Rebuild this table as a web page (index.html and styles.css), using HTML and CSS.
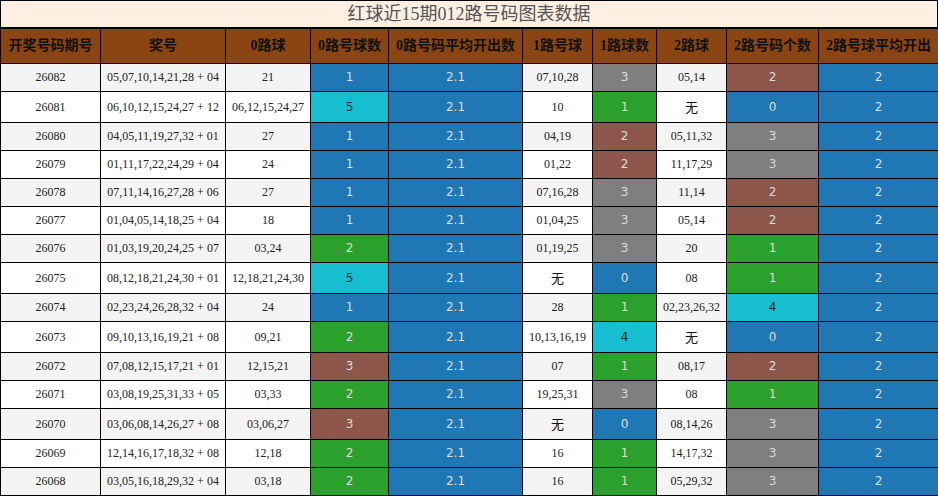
FILE: index.html
```html
<!DOCTYPE html>
<html lang="zh-CN">
<head>
<meta charset="utf-8">
<title>红球近15期012路号码图表数据</title>
<link rel="stylesheet" href="styles.css">
</head>
<body>
<div class="wrap">
  <div class="title">红球近15期012路号码图表数据</div>
  <table class="grid">
    <colgroup>
      <col class="c1"><col class="c2"><col class="c3"><col class="c4"><col class="c5">
      <col class="c6"><col class="c7"><col class="c8"><col class="c9"><col class="c10">
    </colgroup>
    <thead>
      <tr>
        <th>开奖号码期号</th><th>奖号</th><th>0路球</th><th>0路号球数</th><th>0路号码平均开出数</th>
        <th>1路号球</th><th>1路球数</th><th>2路球</th><th>2路号码个数</th><th>2路号球平均开出</th>
      </tr>
    </thead>
    <tbody>
      <tr><td>26082</td><td>05,07,10,14,21,28 + 04</td><td>21</td><td class="k blue">1</td><td class="k blue">2.1</td><td>07,10,28</td><td class="k gray">3</td><td>05,14</td><td class="k brown">2</td><td class="k blue">2</td></tr>
      <tr><td>26081</td><td>06,10,12,15,24,27 + 12</td><td>06,12,15,24,27</td><td class="k cyan">5</td><td class="k blue">2.1</td><td>10</td><td class="k green">1</td><td class="wu">无</td><td class="k blue">0</td><td class="k blue">2</td></tr>
      <tr><td>26080</td><td>04,05,11,19,27,32 + 01</td><td>27</td><td class="k blue">1</td><td class="k blue">2.1</td><td>04,19</td><td class="k brown">2</td><td>05,11,32</td><td class="k gray">3</td><td class="k blue">2</td></tr>
      <tr><td>26079</td><td>01,11,17,22,24,29 + 04</td><td>24</td><td class="k blue">1</td><td class="k blue">2.1</td><td>01,22</td><td class="k brown">2</td><td>11,17,29</td><td class="k gray">3</td><td class="k blue">2</td></tr>
      <tr><td>26078</td><td>07,11,14,16,27,28 + 06</td><td>27</td><td class="k blue">1</td><td class="k blue">2.1</td><td>07,16,28</td><td class="k gray">3</td><td>11,14</td><td class="k brown">2</td><td class="k blue">2</td></tr>
      <tr><td>26077</td><td>01,04,05,14,18,25 + 04</td><td>18</td><td class="k blue">1</td><td class="k blue">2.1</td><td>01,04,25</td><td class="k gray">3</td><td>05,14</td><td class="k brown">2</td><td class="k blue">2</td></tr>
      <tr><td>26076</td><td>01,03,19,20,24,25 + 07</td><td>03,24</td><td class="k green">2</td><td class="k blue">2.1</td><td>01,19,25</td><td class="k gray">3</td><td>20</td><td class="k green">1</td><td class="k blue">2</td></tr>
      <tr><td>26075</td><td>08,12,18,21,24,30 + 01</td><td>12,18,21,24,30</td><td class="k cyan">5</td><td class="k blue">2.1</td><td class="wu">无</td><td class="k blue">0</td><td>08</td><td class="k green">1</td><td class="k blue">2</td></tr>
      <tr><td>26074</td><td>02,23,24,26,28,32 + 04</td><td>24</td><td class="k blue">1</td><td class="k blue">2.1</td><td>28</td><td class="k green">1</td><td>02,23,26,32</td><td class="k cyan">4</td><td class="k blue">2</td></tr>
      <tr><td>26073</td><td>09,10,13,16,19,21 + 08</td><td>09,21</td><td class="k green">2</td><td class="k blue">2.1</td><td>10,13,16,19</td><td class="k cyan">4</td><td class="wu">无</td><td class="k blue">0</td><td class="k blue">2</td></tr>
      <tr><td>26072</td><td>07,08,12,15,17,21 + 01</td><td>12,15,21</td><td class="k brown">3</td><td class="k blue">2.1</td><td>07</td><td class="k green">1</td><td>08,17</td><td class="k brown">2</td><td class="k blue">2</td></tr>
      <tr><td>26071</td><td>03,08,19,25,31,33 + 05</td><td>03,33</td><td class="k green">2</td><td class="k blue">2.1</td><td>19,25,31</td><td class="k gray">3</td><td>08</td><td class="k green">1</td><td class="k blue">2</td></tr>
      <tr><td>26070</td><td>03,06,08,14,26,27 + 08</td><td>03,06,27</td><td class="k brown">3</td><td class="k blue">2.1</td><td class="wu">无</td><td class="k blue">0</td><td>08,14,26</td><td class="k gray">3</td><td class="k blue">2</td></tr>
      <tr><td>26069</td><td>12,14,16,17,18,32 + 08</td><td>12,18</td><td class="k green">2</td><td class="k blue">2.1</td><td>16</td><td class="k green">1</td><td>14,17,32</td><td class="k gray">3</td><td class="k blue">2</td></tr>
      <tr><td>26068</td><td>03,05,16,18,29,32 + 04</td><td>03,18</td><td class="k green">2</td><td class="k blue">2.1</td><td>16</td><td class="k green">1</td><td>05,29,32</td><td class="k gray">3</td><td class="k blue">2</td></tr>
    </tbody>
  </table>
</div>
</body>
</html>
```
FILE: styles.css
```css
html, body {
  margin: 0;
  padding: 0;
  background: #ffffff;
}

.wrap {
  width: 938px;
}

.title {
  box-sizing: border-box;
  width: 938px;
  height: 28px;
  border: 1px solid #000;
  background: #fdf0e2;
  color: #555;
  font: 18px/26px "Liberation Serif", "Noto Sans CJK SC", serif;
  text-align: center;
}

.grid {
  width: 938px;
  border-collapse: collapse;
  table-layout: fixed;
}

.c1 { width: 100px; }
.c2 { width: 125px; }
.c3 { width: 85px; }
.c4 { width: 78px; }
.c5 { width: 134px; }
.c6 { width: 70px; }
.c7 { width: 64px; }
.c8 { width: 70px; }
.c9 { width: 92px; }
.c10 { width: 120px; }

.grid th {
  background: #8b4513;
  color: #111;
  border: 1px solid #000;
  padding: 7px 0;
  font: bold 14px/20px "Liberation Serif", "Noto Sans CJK SC", serif;
  text-align: center;
  white-space: nowrap;
  overflow: hidden;
}

.grid td {
  border: 1px solid #000;
  padding: 6px 0;
  font: 12px/15px "Liberation Serif", "Noto Sans CJK SC", serif;
  color: #222;
  text-align: center;
  white-space: nowrap;
  overflow: hidden;
}

.grid tbody tr:nth-child(odd) td {
  background: #f4f4f4;
}

.grid tbody tr:nth-child(even) td {
  background: #ffffff;
}

.grid td.wu {
  font: 13px/18px "Noto Sans CJK SC", sans-serif;
  color: #111;
}

.grid td.k {
  font: 12px/15px "DejaVu Sans", sans-serif;
  color: #dcdcdc;
}

.grid tbody tr td.blue { background: #1f77b4; }
.grid tbody tr td.green { background: #2ca02c; }
.grid tbody tr td.brown { background: #8c564b; }
.grid tbody tr td.gray { background: #7f7f7f; }
.grid tbody tr td.cyan { background: #17becf; color: #1e2a2c; }
```
